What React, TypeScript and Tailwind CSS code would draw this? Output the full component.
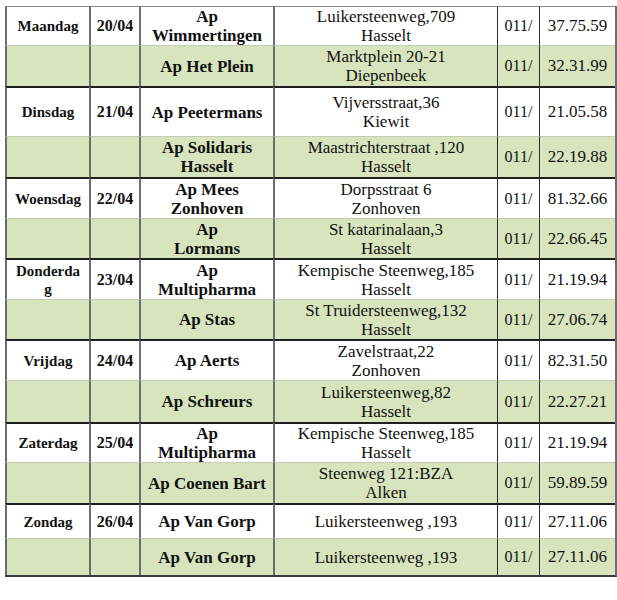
type Row = {
  day?: string[];
  date?: string;
  name: string[];
  address: string[];
  number: string;
  h: string;
};

// one entry per table row, white = first of a day, green = second pharmacy
const rows: Row[] = [
  { day: ["Maandag"], date: "20/04", name: ["Ap", "Wimmertingen"], address: ["Luikersteenweg,709", "Hasselt"], number: "37.75.59", h: "h-[39px]" },
  { name: ["Ap Het Plein"], address: ["Marktplein 20-21", "Diepenbeek"], number: "32.31.99", h: "h-[41px]" },
  { day: ["Dinsdag"], date: "21/04", name: ["Ap Peetermans"], address: ["Vijversstraat,36", "Kiewit"], number: "21.05.58", h: "h-[50px]" },
  { name: ["Ap Solidaris", "Hasselt"], address: ["Maastrichterstraat ,120", "Hasselt"], number: "22.19.88", h: "h-[41px]" },
  { day: ["Woensdag"], date: "22/04", name: ["Ap Mees", "Zonhoven"], address: ["Dorpsstraat 6", "Zonhoven"], number: "81.32.66", h: "h-[41px]" },
  { name: ["Ap", "Lormans"], address: ["St katarinalaan,3", "Hasselt"], number: "22.66.45", h: "h-[40px]" },
  { day: ["Donderda", "g"], date: "23/04", name: ["Ap", "Multipharma"], address: ["Kempische Steenweg,185", "Hasselt"], number: "21.19.94", h: "h-[41px]" },
  { name: ["Ap Stas"], address: ["St Truidersteenweg,132", "Hasselt"], number: "27.06.74", h: "h-[40px]" },
  { day: ["Vrijdag"], date: "24/04", name: ["Ap Aerts"], address: ["Zavelstraat,22", "Zonhoven"], number: "82.31.50", h: "h-[41px]" },
  { name: ["Ap Schreurs"], address: ["Luikersteenweg,82", "Hasselt"], number: "22.27.21", h: "h-[42px]" },
  { day: ["Zaterdag"], date: "25/04", name: ["Ap", "Multipharma"], address: ["Kempische Steenweg,185", "Hasselt"], number: "21.19.94", h: "h-[40px]" },
  { name: ["Ap Coenen Bart"], address: ["Steenweg 121:BZA", "Alken"], number: "59.89.59", h: "h-[41px]" },
  { day: ["Zondag"], date: "26/04", name: ["Ap Van Gorp"], address: ["Luikersteenweg ,193"], number: "27.11.06", h: "h-[35px]" },
  { name: ["Ap Van Gorp"], address: ["Luikersteenweg ,193"], number: "27.11.06", h: "h-[37px]" },
];

function Lines({ items }: { items: string[] }) {
  return (
    <>
      {items.map((t, i) => (
        <div key={i}>{t}</div>
      ))}
    </>
  );
}

export default function App() {
  return (
    <div className="bg-white w-[617px] h-[600px] pt-[6px] pl-[5px] text-[#111] font-['Liberation_Serif']">
      <table className="table-fixed border-separate border-spacing-0 w-[610px] border-r-2 border-b-2 border-r-[#6e6e6e] border-b-[#3a3a3a]">
        <colgroup>
          <col className="w-[84px]" />
          <col className="w-[50px]" />
          <col className="w-[134px]" />
          <col className="w-[224px]" />
          <col className="w-[42px]" />
          <col className="w-[76px]" />
        </colgroup>
        <tbody>
          {rows.map((r, i) => {
            const first = i % 2 === 0;
            const bg = first ? "bg-white" : "bg-[#d7e4bd]";
            const top =
              i === 0
                ? "border-t border-t-[#8a8a8a]"
                : first
                ? "border-t-2 border-t-[#1f1f1f]"
                : "border-t border-t-[#c4ccb4]";
            const cell = `${bg} ${top} p-0 text-center align-middle`;
            return (
              <tr key={i} className={r.h}>
                <td className={`${cell} border-l-2 border-l-[#6e6e6e] text-[15px] leading-[18px] font-bold`}>
                  {r.day && <Lines items={r.day} />}
                </td>
                <td className={`${cell} border-l-2 border-l-[#6e6e6e] text-[16px] font-bold`}>{r.date}</td>
                <td className={`${cell} border-l-2 border-l-[#6e6e6e] text-[17px] leading-[19px] font-bold`}>
                  <Lines items={r.name} />
                </td>
                <td className={`${cell} border-l-2 border-l-[#6e6e6e] text-[17px] leading-[19px] whitespace-nowrap`}>
                  <Lines items={r.address} />
                </td>
                <td className={`${cell} border-l border-l-[#2a2a2a] text-[16px]`}>011/</td>
                <td className={`${cell} border-l border-l-[#2a2a2a] text-[17px]`}>{r.number}</td>
              </tr>
            );
          })}
        </tbody>
      </table>
    </div>
  );
}
